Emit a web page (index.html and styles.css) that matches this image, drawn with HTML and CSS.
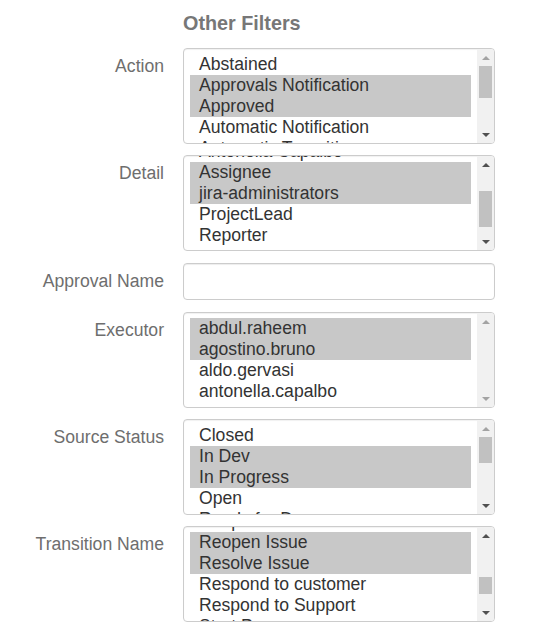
FILE: index.html
```html
<!DOCTYPE html>
<html>
<head>
<meta charset="utf-8">
<link rel="stylesheet" href="styles.css">
</head>
<body>
<div class="page">
  <div class="form">
    <div class="spacer"></div>
    <h3 class="title">Other Filters</h3>

    <label class="label">Action</label>
    <div class="listbox row">
      <div class="viewport"><div class="opts top5">
        <div class="opt">Abstained</div>
        <div class="opt sel">Approvals Notification</div>
        <div class="opt sel">Approved</div>
        <div class="opt">Automatic Notification</div>
        <div class="opt">Automatic Transition</div>
      </div></div>
      <div class="sb">
        <div class="btn"><span class="up light"></span></div>
        <div class="track"><div class="thumb" style="margin-top:0;height:32px"></div></div>
        <div class="btn"><span class="down"></span></div>
      </div>
    </div>

    <label class="label">Detail</label>
    <div class="listbox row row-before-input">
      <div class="viewport"><div class="opts up15">
        <div class="opt">Antonella Capalbo</div>
        <div class="opt sel">Assignee</div>
        <div class="opt sel">jira-administrators</div>
        <div class="opt">ProjectLead</div>
        <div class="opt">Reporter</div>
      </div></div>
      <div class="sb">
        <div class="btn"><span class="up"></span></div>
        <div class="track"><div class="thumb" style="margin-top:18px;height:36px"></div></div>
        <div class="btn"><span class="down"></span></div>
      </div>
    </div>

    <label class="label">Approval Name</label>
    <input class="text-input row-input" type="text">

    <label class="label">Executor</label>
    <div class="listbox row">
      <div class="viewport"><div class="opts top5">
        <div class="opt sel">abdul.raheem</div>
        <div class="opt sel">agostino.bruno</div>
        <div class="opt">aldo.gervasi</div>
        <div class="opt">antonella.capalbo</div>
      </div></div>
      <div class="sb">
        <div class="btn"><span class="up light"></span></div>
        <div class="track"></div>
        <div class="btn"><span class="down light"></span></div>
      </div>
    </div>

    <label class="label">Source Status</label>
    <div class="listbox row">
      <div class="viewport"><div class="opts top5">
        <div class="opt">Closed</div>
        <div class="opt sel">In Dev</div>
        <div class="opt sel">In Progress</div>
        <div class="opt">Open</div>
        <div class="opt">Ready for Dev</div>
      </div></div>
      <div class="sb">
        <div class="btn"><span class="up light"></span></div>
        <div class="track"><div class="thumb" style="margin-top:0;height:26px"></div></div>
        <div class="btn"><span class="down"></span></div>
      </div>
    </div>

    <label class="label">Transition Name</label>
    <div class="listbox row">
      <div class="viewport"><div class="opts up16">
        <div class="opt">Reopen</div>
        <div class="opt sel">Reopen Issue</div>
        <div class="opt sel">Resolve Issue</div>
        <div class="opt">Respond to customer</div>
        <div class="opt">Respond to Support</div>
        <div class="opt">Start Progress</div>
      </div></div>
      <div class="sb">
        <div class="btn"><span class="up"></span></div>
        <div class="track"><div class="thumb" style="margin-top:33px;height:17px"></div></div>
        <div class="btn"><span class="down"></span></div>
      </div>
    </div>
  </div>
</div>
</body>
</html>
```

FILE: styles.css
```css
* { box-sizing: border-box; }
html, body { margin: 0; padding: 0; background: #fff; }
body {
  font-family: "Liberation Sans", Arial, sans-serif;
  font-size: 17.6px;
  color: #333;
  width: 541px;
}
.page { padding-top: 11px; }
.form {
  display: grid;
  grid-template-columns: 164px 312px;
  column-gap: 19px;
  align-items: start;
}
.title {
  margin: 0 0 13px 0;
  font-size: 19.8px;
  line-height: 24px;
  font-weight: bold;
  color: #777;
}
.label {
  text-align: right;
  color: #6e6e6e;
  padding-top: 7px;
  line-height: 22px;
}
.row { margin-bottom: 11px; }
.row-before-input { margin-bottom: 12px; }
.row-input { margin-bottom: 12px; }
.listbox {
  display: flex;
  height: 96px;
  border: 1px solid #ccc;
  border-radius: 4px;
  overflow: hidden;
  background: #fff;
  box-shadow: inset 0 1px 1px rgba(0,0,0,0.06);
}
.viewport {
  flex: 1;
  overflow: hidden;
  padding: 0 6px;
}
.opts.top5 { margin-top: 5px; }
.opts.up15 { margin-top: -15px; }
.opts.up16 { margin-top: -16px; }
.opt {
  height: 21px;
  line-height: 21px;
  padding-left: 9px;
  white-space: nowrap;
  color: #333;
}
.opt.sel { background: #c8c8c8; }
.sb {
  width: 17px;
  background: #f1f1f1;
  display: flex;
  flex-direction: column;
}
.btn {
  height: 17px;
  display: flex;
  align-items: center;
  justify-content: center;
  flex: none;
}
.track { flex: 1; padding: 0 2px; }
.thumb { background: #c1c1c1; width: 100%; }
.up, .down {
  width: 0; height: 0;
  border-left: 4px solid transparent;
  border-right: 4px solid transparent;
}
.up { border-bottom: 4px solid #505050; }
.down { border-top: 4px solid #505050; }
.up.light { border-bottom-color: #a3a3a3; }
.down.light { border-top-color: #a3a3a3; }
.text-input {
  display: block;
  width: 312px;
  height: 37px;
  margin-top: 0;
  border: 1px solid #ccc;
  border-radius: 4px;
  box-shadow: inset 0 1px 1px rgba(0,0,0,0.075);
  font: inherit;
  padding: 6px 12px;
  outline: none;
}
```
